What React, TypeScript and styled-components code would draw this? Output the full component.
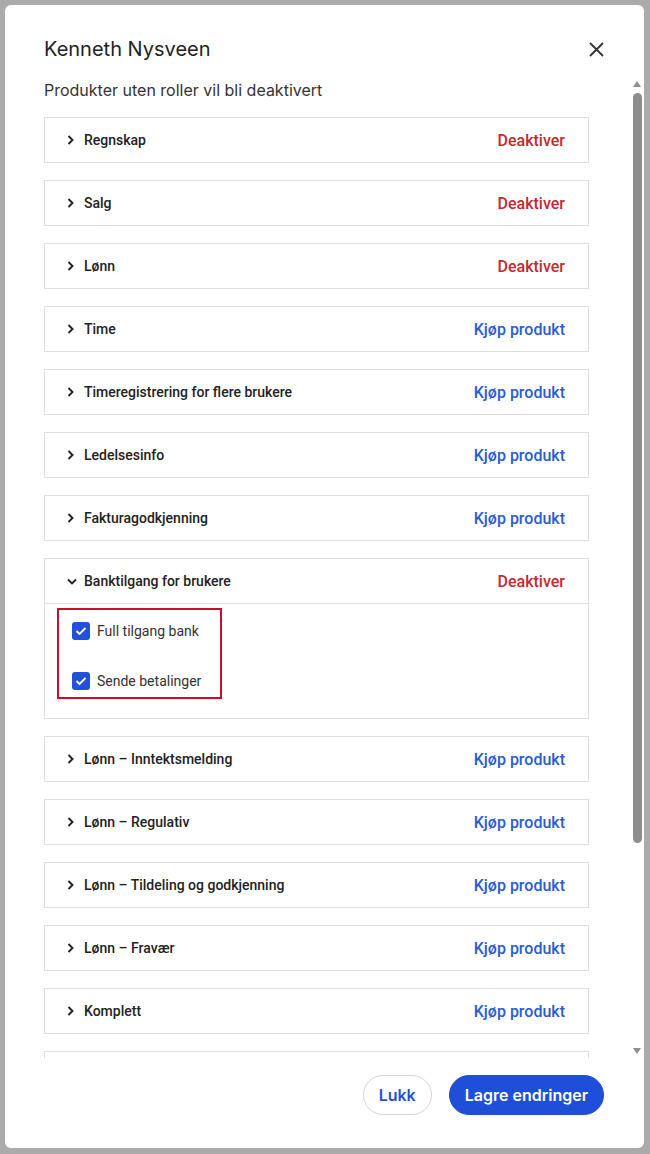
import * as React from "react"
import styled, { createGlobalStyle } from "styled-components"

const GlobalStyle = createGlobalStyle`
  html, body {
    margin: 0;
    padding: 0;
    background: #ababab;
  }
  * {
    box-sizing: border-box;
  }
`

const Backdrop = styled.div`
  height: 1154px;
  padding: 5px 6px 6px 5px;
  background: #ababab;
`

const Dialog = styled.div`
  display: flex;
  flex-direction: column;
  height: 1143px;
  background: #ffffff;
  border-radius: 6px;
  overflow: hidden;
  font-family: Inter, "Liberation Sans", sans-serif;
`

const Header = styled.div`
  display: flex;
  align-items: flex-start;
  justify-content: space-between;
  height: 73px;
  padding: 32px 36px 0 39px;
`

const Title = styled.h2`
  margin: 0;
  font-size: 20px;
  line-height: 24px;
  font-weight: 400;
  color: #222222;
`

const CloseButton = styled.button`
  display: flex;
  align-items: center;
  justify-content: center;
  width: 24px;
  height: 24px;
  padding: 0;
  border: none;
  background: none;
  cursor: pointer;
  color: #333333;
`

const Body = styled.div`
  display: flex;
  flex: 1;
  min-height: 0;
`

const List = styled.div`
  flex: 1;
  overflow: hidden;
  padding: 2px 0 0 39px;
`

const Subtitle = styled.p`
  margin: 0 0 17px;
  font-size: 16px;
  line-height: 20px;
  color: #333333;
`

const Cards = styled.div`
  display: flex;
  flex-direction: column;
  gap: 17px;
  width: 545px;
`

const Card = styled.div`
  border: 1px solid #dcdfe2;
  background: #ffffff;
`

const CardHeader = styled.div<{ $open?: boolean }>`
  display: flex;
  align-items: center;
  height: ${(p) => (p.$open ? "45px" : "44px")};
  padding: 0 23px 0 20px;
  border-bottom: ${(p) => (p.$open ? "1px solid #dcdfe2" : "none")};
  font-family: Roboto, "Liberation Sans", sans-serif;
`

const Chevron = styled.span`
  display: flex;
  align-items: center;
  justify-content: flex-start;
  width: 12px;
  padding-left: 2px;
  margin-right: 7px;
  color: #222222;
`

const Label = styled.span`
  flex: 1;
  font-size: 14px;
  font-weight: 500;
  color: #222222;
`

const Action = styled.button<{ $tone: "danger" | "buy" }>`
  padding: 0;
  border: none;
  background: none;
  cursor: pointer;
  font-family: Roboto, "Liberation Sans", sans-serif;
  font-size: 16px;
  font-weight: 500;
  color: ${(p) => (p.$tone === "danger" ? "#c6282f" : "#2a5bd7")};
`

const CardContent = styled.div`
  padding: 4px 0 19px 12px;
`

const RoleBox = styled.div`
  display: flex;
  flex-direction: column;
  gap: 20px;
  width: fit-content;
  padding: 6px 19px 1px 13px;
  border: 2px solid #c8102e;
`

const RoleRow = styled.label`
  display: flex;
  align-items: center;
  gap: 7px;
  height: 30px;
  font-family: Roboto, "Liberation Sans", sans-serif;
  font-size: 14px;
  color: #333333;
`

const CheckBox = styled.span`
  display: flex;
  align-items: center;
  justify-content: center;
  width: 18px;
  height: 18px;
  border-radius: 3px;
  background: #2350d8;
`

const Rail = styled.div`
  display: flex;
  flex-direction: column;
  align-items: center;
  width: 10px;
  margin-right: 2px;
  padding: 3px 0 4px;
`

const ArrowUp = styled.span`
  width: 0;
  height: 0;
  border-left: 4px solid transparent;
  border-right: 4px solid transparent;
  border-bottom: 6px solid #8d8d8d;
`

const ArrowDown = styled.span`
  width: 0;
  height: 0;
  border-left: 4px solid transparent;
  border-right: 4px solid transparent;
  border-top: 6px solid #8d8d8d;
`

const Thumb = styled.div`
  width: 9px;
  margin-top: 6px;
  border-radius: 5px;
  background: #8d8d8d;
`

const RailSpacer = styled.div`
  flex: 1;
`

const Footer = styled.div`
  display: flex;
  justify-content: flex-end;
  gap: 17px;
  padding: 17px 40px 33px;
`

const Button = styled.button<{ $primary?: boolean }>`
  height: 40px;
  padding: 0 15px;
  border-radius: 20px;
  border: 1px solid ${(p) => (p.$primary ? "#1f4fd8" : "#d4d4d4")};
  background: ${(p) => (p.$primary ? "#1f4fd8" : "#ffffff")};
  color: ${(p) => (p.$primary ? "#ffffff" : "#1f4fd8")};
  font-family: Inter, "Liberation Sans", sans-serif;
  font-size: 16px;
  font-weight: 600;
  cursor: pointer;
`

const ChevronIcon = ({ open }: { open?: boolean }) =>
  open ? (
    <svg width="10" height="7" viewBox="0 0 10 7">
      <polyline points="1,1.5 5,5.5 9,1.5" fill="none" stroke="currentColor" strokeWidth="1.9" />
    </svg>
  ) : (
    <svg width="7" height="10" viewBox="0 0 7 10">
      <polyline points="1.5,1 5.5,5 1.5,9" fill="none" stroke="currentColor" strokeWidth="1.9" />
    </svg>
  )

const CloseIcon = () => (
  <svg width="15" height="15" viewBox="0 0 15 15">
    <path d="M1 1 L14 14 M14 1 L1 14" stroke="currentColor" strokeWidth="1.8" />
  </svg>
)

const CheckIcon = () => (
  <svg width="12" height="10" viewBox="0 0 12 10">
    <polyline points="1.5,5 4.5,8 10.5,2" fill="none" stroke="#ffffff" strokeWidth="1.8" />
  </svg>
)

interface Product {
  name: string
  active: boolean
  open?: boolean
  roles?: string[]
}

const products: Product[] = [
  { name: "Regnskap", active: true },
  { name: "Salg", active: true },
  { name: "Lønn", active: true },
  { name: "Time", active: false },
  { name: "Timeregistrering for flere brukere", active: false },
  { name: "Ledelsesinfo", active: false },
  { name: "Fakturagodkjenning", active: false },
  {
    name: "Banktilgang for brukere",
    active: true,
    open: true,
    roles: ["Full tilgang bank", "Sende betalinger"],
  },
  { name: "Lønn – Inntektsmelding", active: false },
  { name: "Lønn – Regulativ", active: false },
  { name: "Lønn – Tildeling og godkjenning", active: false },
  { name: "Lønn – Fravær", active: false },
  { name: "Komplett", active: false },
  { name: "Reiseregning", active: false },
]

const ProductCard: React.FC<{ product: Product }> = ({ product }) => (
  <Card>
    <CardHeader $open={product.open}>
      <Chevron>
        <ChevronIcon open={product.open} />
      </Chevron>
      <Label>{product.name}</Label>
      <Action $tone={product.active ? "danger" : "buy"}>
        {product.active ? "Deaktiver" : "Kjøp produkt"}
      </Action>
    </CardHeader>
    {product.open && product.roles && (
      <CardContent>
        <RoleBox>
          {product.roles.map((role) => (
            <RoleRow key={role}>
              <CheckBox>
                <CheckIcon />
              </CheckBox>
              {role}
            </RoleRow>
          ))}
        </RoleBox>
      </CardContent>
    )}
  </Card>
)

export default function App() {
  return (
    <>
      <GlobalStyle />
      <Backdrop>
        <Dialog role="dialog">
          <Header>
            <Title>Kenneth Nysveen</Title>
            <CloseButton aria-label="Lukk">
              <CloseIcon />
            </CloseButton>
          </Header>
          <Body>
            <List>
              <Subtitle>Produkter uten roller vil bli deaktivert</Subtitle>
              <Cards>
                {products.map((p) => (
                  <ProductCard key={p.name} product={p} />
                ))}
              </Cards>
            </List>
            <Rail>
              <ArrowUp />
              <Thumb style={{ height: 750 }} />
              <RailSpacer />
              <ArrowDown />
            </Rail>
          </Body>
          <Footer>
            <Button>Lukk</Button>
            <Button $primary>Lagre endringer</Button>
          </Footer>
        </Dialog>
      </Backdrop>
    </>
  )
}
